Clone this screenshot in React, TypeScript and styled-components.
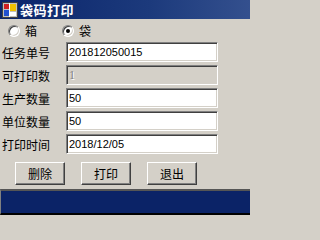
import { Fragment } from "react";
import styled, { createGlobalStyle } from "styled-components";

const GlobalStyle = createGlobalStyle`
  html, body {
    margin: 0;
    padding: 0;
    background: #d4d0c8;
  }
  * {
    box-sizing: border-box;
  }
`;

const cjk = `"Noto Sans CJK SC", "Noto Sans", sans-serif`;

const Window = styled.div`
  width: 250px;
  height: 215px;
  display: flex;
  flex-direction: column;
  background: #d4d0c8;
  overflow: hidden;
  font-family: ${cjk};
`;

const TitleBar = styled.div`
  height: 19px;
  display: flex;
  align-items: center;
  gap: 2px;
  padding-left: 2px;
  background: linear-gradient(to right, #0a246a 0%, #1c3a7c 60%, #34508e 100%);
  color: #fff;
  font-weight: bold;
  font-size: 13px;
  letter-spacing: 0.5px;
`;

const Body = styled.div`
  flex: 1;
  display: flex;
  flex-direction: column;
`;

const RadioRow = styled.div`
  display: flex;
  align-items: center;
  height: 13px;
  margin-top: 5px;
  padding-left: 8px;
  gap: 2px;
  font-size: 12px;
`;

const RadioItem = styled.label`
  display: flex;
  align-items: center;
  gap: 5px;
  width: 52px;
  line-height: 13px;
`;

const RadioCircle = styled.span<{ $checked?: boolean }>`
  position: relative;
  width: 12px;
  height: 12px;
  border-radius: 50%;
  background: #fff;
  border: 1px solid;
  border-color: #808080 #ffffff #ffffff #808080;
  box-shadow: inset 1px 1px 0 #404040, inset -1px -1px 0 #d4d0c8;

  &::after {
    content: "";
    display: ${(p) => (p.$checked ? "block" : "none")};
    position: absolute;
    left: 3px;
    top: 3px;
    width: 4px;
    height: 4px;
    border-radius: 50%;
    background: #000;
  }
`;

const Form = styled.div`
  display: grid;
  grid-template-columns: 64px 152px;
  column-gap: 2px;
  row-gap: 3px;
  margin-top: 5px;
`;

const Label = styled.div`
  height: 20px;
  display: flex;
  align-items: center;
  padding-left: 2px;
  font-size: 12px;
  color: #000;
`;

const Field = styled.input`
  height: 20px;
  width: 152px;
  margin: 0;
  padding: 0 2px;
  border: 1px solid;
  border-color: #808080 #ffffff #ffffff #808080;
  box-shadow: inset 1px 1px 0 #404040, inset -1px -1px 0 #d4d0c8;
  background: #fff;
  font-family: "Liberation Sans", Arial, sans-serif;
  font-size: 11px;
  color: #000;
  outline: none;

  &:disabled {
    background: #d4d0c8;
    color: #808080;
    font-family: "Liberation Serif", serif;
    font-size: 12px;
    text-shadow: 1px 1px 0 #fff;
  }
`;

const ButtonRow = styled.div`
  display: flex;
  gap: 16px;
  padding-left: 15px;
  margin-top: 8px;
`;

const Button = styled.button`
  width: 50px;
  height: 23px;
  margin: 0;
  padding: 0;
  background: #d4d0c8;
  border: 1px solid;
  border-color: #ffffff #404040 #404040 #ffffff;
  box-shadow: inset -1px -1px 0 #808080;
  font-family: ${cjk};
  font-size: 12px;
  color: #000;
`;

const StatusBar = styled.div`
  margin-top: auto;
  height: 26px;
  background: #0b2367;
  border-top: 2px solid #555555;
  border-left: 1px solid #808080;
  border-bottom: 2px solid #000;
`;

function AppIcon() {
  return (
    <svg width="16" height="16" viewBox="0 0 16 16">
      <rect x="0.5" y="0.5" width="15" height="15" fill="#c0c0c0" stroke="#404040" />
      <rect x="2" y="2" width="5" height="5" fill="#d02020" />
      <rect x="8" y="2" width="6" height="7" fill="#f0c000" />
      <rect x="2" y="8" width="5" height="6" fill="#2050d0" />
      <rect x="8" y="10" width="6" height="4" fill="#ffffff" />
      <line x1="7.5" y1="1" x2="7.5" y2="15" stroke="#ffffff" />
    </svg>
  );
}

const fields = [
  { label: "任务单号", value: "201812050015" },
  { label: "可打印数", value: "1", disabled: true },
  { label: "生产数量", value: "50" },
  { label: "单位数量", value: "50" },
  { label: "打印时间", value: "2018/12/05" },
];

export default function App() {
  return (
    <>
      <GlobalStyle />
      <Window>
        <TitleBar>
          <AppIcon />
          <span>袋码打印</span>
        </TitleBar>
        <Body>
          <RadioRow>
            <RadioItem>
              <RadioCircle />
              箱
            </RadioItem>
            <RadioItem>
              <RadioCircle $checked />
              袋
            </RadioItem>
          </RadioRow>
          <Form>
            {fields.map((f) => (
              <Fragment key={f.label}>
                <Label>{f.label}</Label>
                <Field defaultValue={f.value} disabled={f.disabled} />
              </Fragment>
            ))}
          </Form>
          <ButtonRow>
            <Button>删除</Button>
            <Button>打印</Button>
            <Button>退出</Button>
          </ButtonRow>
          <StatusBar />
        </Body>
      </Window>
    </>
  );
}
